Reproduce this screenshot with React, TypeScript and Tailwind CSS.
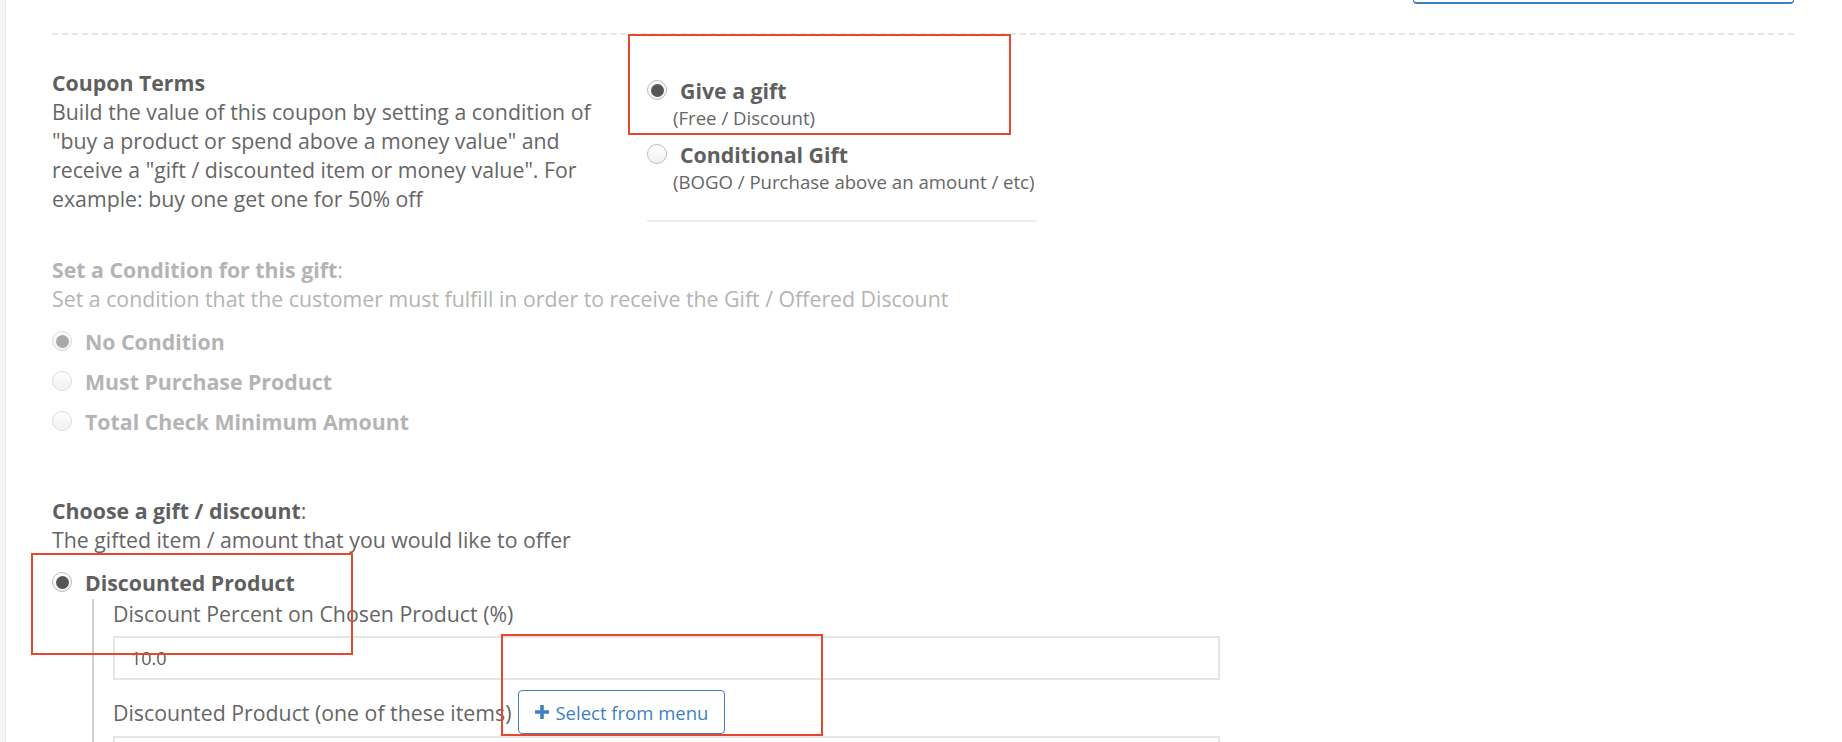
import React from 'react';

function Radio({ checked, disabled }: { checked?: boolean; disabled?: boolean }) {
  return (
    <span
      className={`mt-[4px] flex h-[20px] w-[20px] shrink-0 items-center justify-center rounded-full border bg-gradient-to-b from-white to-[#f1f1f1] ${
        disabled ? 'border-[#dcdcdc]' : 'border-[#bdbdbd]'
      }`}
    >
      {checked && (
        <span className={`h-[13px] w-[13px] rounded-full ${disabled ? 'bg-[#a8a8a8]' : 'bg-[#555555]'}`} />
      )}
    </span>
  );
}

function Annot({ className }: { className: string }) {
  return <div className={`pointer-events-none absolute border-2 border-[#e8472f] ${className}`} />;
}

export default function App() {
  return (
    <div
      className="relative flex h-[742px] overflow-hidden bg-white text-[21.3px] leading-[29px] text-[#666666]"
      style={{ fontFamily: '"Open Sans", "Noto Sans", sans-serif' }}
    >
      <div className="w-[6px] shrink-0 border-r border-[#e8eaef] bg-[#f5f6f9]" />

      <main className="flex-1 pl-[46px] pr-[48px]">
        {/* bottom edge of the button above */}
        <div className="flex justify-end">
          <div className="h-[4px] w-[381px] rounded-b-[4px] border-x-[1.5px] border-b-2 border-[#3d7fc1]" />
        </div>
        <div className="mt-[29px] border-t-2 border-dashed border-[#e6e6e6]" />

        {/* coupon terms */}
        <div className="mt-[33px] grid grid-cols-[595px_1fr]">
          <div className="w-[560px]">
            <div className="font-bold text-[#5f5f5f]">Coupon Terms</div>
            <p>
              Build the value of this coupon by setting a condition of "buy a product or spend above a money value" and
              receive a "gift / discounted item or money value". For example: buy one get one for 50% off
            </p>
          </div>
          <div className="pt-[8px]">
            <div className="flex gap-[13px]">
              <Radio checked />
              <span className="font-bold text-[#5f5f5f]">Give a gift</span>
            </div>
            <div className="ml-[26px] text-[18.6px] leading-[25px]">(Free / Discount)</div>
            <div className="mt-[10px] flex gap-[13px]">
              <Radio />
              <span className="font-bold text-[#5f5f5f]">Conditional Gift</span>
            </div>
            <div className="ml-[26px] text-[18.6px] leading-[25px]">(BOGO / Purchase above an amount / etc)</div>
            <div className="mt-[26px] h-[2px] w-[390px] bg-[#ececec]" />
          </div>
        </div>

        {/* condition (disabled) */}
        <div className="mt-[33px] text-[#b4b4b4]">
          <div>
            <span className="font-bold">Set a Condition for this gift</span>:
          </div>
          <div>Set a condition that the customer must fulfill in order to receive the Gift / Offered Discount</div>
          <div className="mt-[14px] flex flex-col gap-[11px] font-bold">
            <div className="flex gap-[13px]">
              <Radio checked disabled />
              <span>No Condition</span>
            </div>
            <div className="flex gap-[13px]">
              <Radio disabled />
              <span>Must Purchase Product</span>
            </div>
            <div className="flex gap-[13px]">
              <Radio disabled />
              <span>Total Check Minimum Amount</span>
            </div>
          </div>
        </div>

        {/* gift / discount */}
        <div className="mt-[60px]">
          <div>
            <span className="font-bold text-[#5f5f5f]">Choose a gift / discount</span>:
          </div>
          <div>The gifted item / amount that you would like to offer</div>
          <div className="mt-[14px] flex gap-[13px]">
            <Radio checked />
            <span className="font-bold text-[#5f5f5f]">Discounted Product</span>
          </div>
          <div className="ml-[40px] mt-[2px] w-[1128px] border-l-2 border-[#cfcfcf] pl-[19px]">
            <div>Discount Percent on Chosen Product (%)</div>
            <div className="mt-[8px] flex h-[44px] items-center border-2 border-[#e6e6e6] pl-[16px] text-[18px] text-[#595959]">
              10.0
            </div>
            <div className="mt-[10px] flex items-center">
              <span>Discounted Product (one of these items)</span>
              <button className="ml-[7px] flex h-[44px] w-[207px] items-center gap-[6px] rounded-[4px] border border-[#3f80c3] pl-[16px] text-[18.5px] text-[#3f80c3]">
                <svg width="14" height="14" viewBox="0 0 14 14">
                  <path d="M5.2 0h3.6v5.2H14v3.6H8.8V14H5.2V8.8H0V5.2h5.2z" fill="#3f80c3" />
                </svg>
                Select from menu
              </button>
            </div>
            <div className="mt-[2px] h-[44px] border-2 border-[#e6e6e6]" />
          </div>
        </div>
      </main>

      <Annot className="left-[628px] top-[34px] h-[101px] w-[383px]" />
      <Annot className="left-[31px] top-[553px] h-[102px] w-[322px]" />
      <Annot className="left-[501px] top-[634px] h-[102px] w-[322px]" />
    </div>
  );
}
